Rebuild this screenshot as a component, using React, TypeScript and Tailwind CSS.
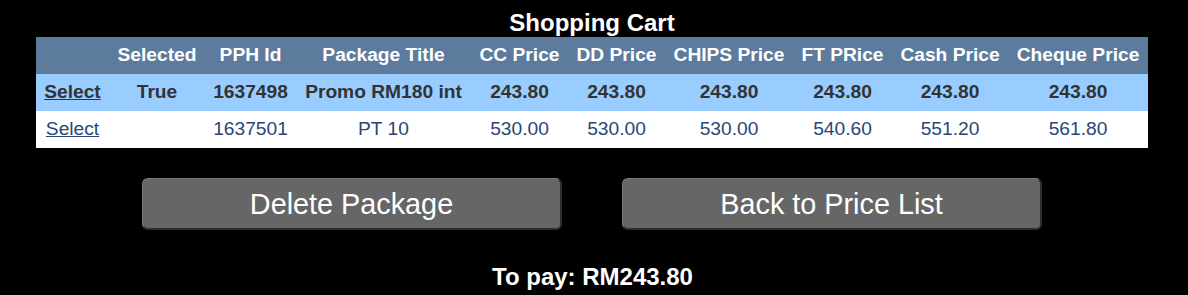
import React from "react";

const cols = [73, 96, 91, 175, 97, 97, 128, 99, 116, 140];
const headers = ["", "Selected", "PPH Id", "Package Title", "CC Price", "DD Price", "CHIPS Price", "FT PRice", "Cash Price", "Cheque Price"];
const row1 = ["True", "1637498", "Promo RM180 int", "243.80", "243.80", "243.80", "243.80", "243.80", "243.80"];
const row2 = ["", "1637501", "PT 10", "530.00", "530.00", "530.00", "540.60", "551.20", "561.80"];

export default function App() {
  return (
    <div
      className="w-[1188px] h-[295px] bg-black text-white"
      style={{ fontFamily: '"Liberation Sans", Arial, sans-serif' }}
    >
      <div className="pt-[9px] h-[37px] text-center text-[24px] leading-[28px] font-bold">
        <span className="relative left-[-2px]">Shopping Cart</span>
      </div>
      <div className="px-[36px]">
        <table className="table-fixed border-collapse w-[1112px] text-[19.2px]">
          <colgroup>
            {cols.map((w, i) => (
              <col key={i} style={{ width: w }} />
            ))}
          </colgroup>
          <thead>
            <tr className="h-[37px] bg-[#5D7B9D] text-white font-bold">
              {headers.map((h, i) => (
                <th key={i} className="p-0 text-center font-bold whitespace-nowrap">
                  {h}
                </th>
              ))}
            </tr>
          </thead>
          <tbody>
            <tr className="h-[37px] bg-[#99CCFF] text-[#333333] font-bold">
              <td className="p-0 text-center">
                <a className="underline text-[#333333]">Select</a>
              </td>
              {row1.map((c, i) => (
                <td key={i} className="p-0 text-center whitespace-nowrap">
                  {c}
                </td>
              ))}
            </tr>
            <tr className="h-[37px] bg-white text-[#284775]">
              <td className="p-0 text-center">
                <a className="underline text-[#284775]">Select</a>
              </td>
              {row2.map((c, i) => (
                <td key={i} className="p-0 text-center whitespace-nowrap">
                  {c}
                </td>
              ))}
            </tr>
          </tbody>
        </table>
      </div>
      <div className="flex justify-center gap-[60px] pt-[30px] pr-[4px]">
        <button className="w-[420px] h-[52px] bg-[#666666] text-white text-[28.8px] leading-[32px] rounded-[6px] border-t border-l border-t-[#7a7a7a] border-l-[#7a7a7a] border-b-2 border-r-2 border-b-[#2e2e2e] border-r-[#2e2e2e]">
          Delete Package
        </button>
        <button className="w-[420px] h-[52px] bg-[#666666] text-white text-[28.8px] leading-[32px] rounded-[6px] border-t border-l border-t-[#7a7a7a] border-l-[#7a7a7a] border-b-2 border-r-2 border-b-[#2e2e2e] border-r-[#2e2e2e]">
          Back to Price List
        </button>
      </div>
      <div className="pt-[33px] pr-[3px] text-center text-[24px] leading-[28px] font-bold">
        To pay: RM243.80
      </div>
    </div>
  );
}
